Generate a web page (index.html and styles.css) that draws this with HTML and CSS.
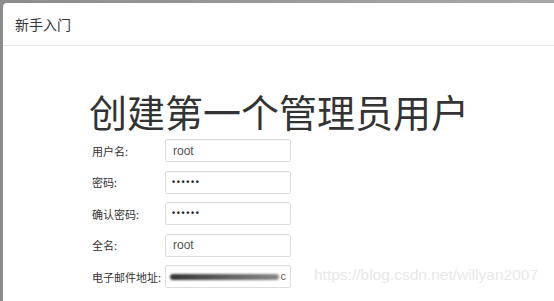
FILE: index.html
```html
<!DOCTYPE html>
<html lang="zh-CN">
<head>
  <meta charset="UTF-8">
  <title>新手入门</title>
  <link rel="stylesheet" href="styles.css">
</head>
<body>
  <div class="modal">
    <div class="modal-header">新手入门</div>
    <div class="modal-body">
      <h1>创建第一个管理员用户</h1>
      <form class="admin-form">
        <label class="row">
          <span class="label">用户名:</span>
          <input class="field" type="text" value="root">
        </label>
        <label class="row">
          <span class="label">密码:</span>
          <span class="field dots">••••••</span>
        </label>
        <label class="row">
          <span class="label">确认密码:</span>
          <span class="field dots">••••••</span>
        </label>
        <label class="row">
          <span class="label">全名:</span>
          <input class="field" type="text" value="root">
        </label>
        <label class="row">
          <span class="label">电子邮件地址:</span>
          <span class="field email"><span class="scribble"></span><span class="tail">c</span></span>
        </label>
      </form>
      <div class="watermark">https://blog.csdn.net/willyan2007</div>
    </div>
  </div>
</body>
</html>
```

FILE: styles.css
```css
* {
  margin: 0;
  padding: 0;
  box-sizing: border-box;
}

body {
  font-family: "Liberation Sans", "Noto Sans CJK SC", sans-serif;
  background: linear-gradient(to right, #8c8c8c, #a8a8a8);
  padding: 3px 0 0 3px;
  height: 301px;
  overflow: hidden;
  color: #333;
}

.modal {
  background: #fff;
  border-radius: 4px 0 0 0;
  height: 298px;
  position: relative;
}

.modal-header {
  height: 43px;
  padding: 12px 12px 0;
  font-size: 14px;
  line-height: 18px;
  border-bottom: 1px solid #e5e5e5;
  color: #333;
  font-family: "Noto Sans CJK SC", sans-serif;
}

.modal-body {
  padding: 41px 0 0 86px;
}

h1 {
  font-family: "Noto Sans CJK SC", sans-serif;
  font-weight: 400;
  font-size: 38px;
  line-height: 48px;
  color: #333;
  margin-bottom: 4px;
}

.admin-form {
  display: flex;
  flex-direction: column;
  gap: 8.5px;
  padding-left: 3px;
}

.row {
  display: grid;
  grid-template-columns: 73px 126px;
  align-items: center;
}

.label {
  font-family: "Noto Sans CJK SC", sans-serif;
  font-size: 11px;
  color: #333;
}

.field {
  display: block;
  height: 23px;
  border: 1px solid #ddd;
  border-radius: 2px;
  padding: 0 7px;
  font: 12px "Liberation Sans", sans-serif;
  line-height: 21px;
  color: #555;
  outline: none;
  box-shadow: inset 0 1px 1px rgba(0, 0, 0, 0.03);
}

.dots {
  font-size: 9px;
  font-weight: 700;
  letter-spacing: 1.6px;
  padding-left: 6px;
  color: #222;
}

.email {
  overflow: hidden;
  padding: 0 4px;
  display: flex;
  align-items: center;
}

.scribble {
  display: block;
  height: 6px;
  flex: 1;
  background: linear-gradient(to right, #333, #666 60%, #888);
  border-radius: 3px;
  filter: blur(1px);
  margin-right: 2px;
}

.tail {
  font-size: 11px;
  color: #666;
}

.watermark {
  position: absolute;
  left: 311px;
  top: 263px;
  font-size: 15.5px;
  color: #e8e8e8;
  font-family: "Liberation Sans", sans-serif;
}
```
